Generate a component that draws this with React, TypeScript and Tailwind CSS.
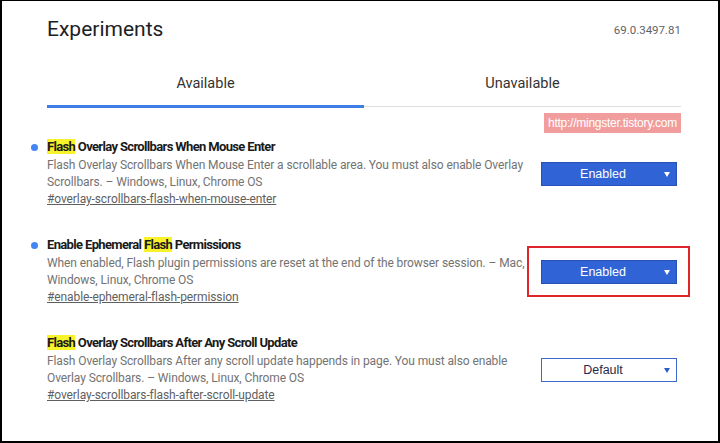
import React from 'react';

type Experiment = {
  before?: string;
  after: string;
  lines: string[];
  link: string;
  value: 'Enabled' | 'Default';
  active: boolean;
  marked?: boolean;
};

const experiments: Experiment[] = [
  {
    after: ' Overlay Scrollbars When Mouse Enter',
    lines: [
      'Flash Overlay Scrollbars When Mouse Enter a scrollable area. You must also enable Overlay',
      'Scrollbars. – Windows, Linux, Chrome OS',
    ],
    link: '#overlay-scrollbars-flash-when-mouse-enter',
    value: 'Enabled',
    active: true,
  },
  {
    before: 'Enable Ephemeral ',
    after: ' Permissions',
    lines: [
      'When enabled, Flash plugin permissions are reset at the end of the browser session. – Mac,',
      'Windows, Linux, Chrome OS',
    ],
    link: '#enable-ephemeral-flash-permission',
    value: 'Enabled',
    active: true,
    marked: true,
  },
  {
    after: ' Overlay Scrollbars After Any Scroll Update',
    lines: [
      'Flash Overlay Scrollbars After any scroll update happends in page. You must also enable',
      'Overlay Scrollbars. – Windows, Linux, Chrome OS',
    ],
    link: '#overlay-scrollbars-flash-after-scroll-update',
    value: 'Default',
    active: false,
  },
];

const Select = ({ value }: { value: 'Enabled' | 'Default' }) => {
  const enabled = value === 'Enabled';
  return (
    <div
      className={
        enabled
          ? 'relative flex h-[24px] w-[136px] items-center justify-center border border-[#2452b5] bg-[#2f63d6] pl-[8px] pr-[20px] font-[Liberation_Sans,Arial,sans-serif] text-[12.5px] text-white'
          : 'relative flex h-[24px] w-[136px] items-center justify-center border border-[#3c67cc] bg-white pl-[8px] pr-[20px] font-[Liberation_Sans,Arial,sans-serif] text-[12.5px] text-[#1f2b4a]'
      }
    >
      {value}
      <span
        className={
          enabled
            ? 'absolute right-[6px] top-[9px] h-0 w-0 border-l-[3px] border-r-[3px] border-t-[5px] border-l-transparent border-r-transparent border-t-white'
            : 'absolute right-[6px] top-[9px] h-0 w-0 border-l-[3px] border-r-[3px] border-t-[5px] border-l-transparent border-r-transparent border-t-[#2d5cc8]'
        }
      />
    </div>
  );
};

export default function App() {
  return (
    <div className="relative h-[443px] w-[720px] overflow-hidden border-b-2 border-l-2 border-r-2 border-t border-black bg-white font-[Roboto,sans-serif]">
      <div className="pl-[45px] pr-[37px]">
        <div className="flex items-start justify-between pt-[14px]">
          <h1 className="text-[21px] leading-[28px] text-[#202124]">Experiments</h1>
          <span className="mt-[8px] text-[11.5px] leading-[14px] text-[#5f6368]">69.0.3497.81</span>
        </div>

        <div className="mt-[31px] flex">
          <div className="flex flex-1 flex-col items-center">
            <span className="text-[14.5px] leading-[20px] text-[#333]">Available</span>
            <div className="mt-[11px] h-[3px] w-full bg-[#3f7ee6]" />
          </div>
          <div className="flex flex-1 flex-col items-center">
            <span className="text-[14.5px] leading-[20px] text-[#333]">Unavailable</span>
            <div className="mt-[11px] flex h-[3px] w-full items-center">
              <div className="h-px w-full bg-[#dedede]" />
            </div>
          </div>
        </div>

        <div className="mt-[29px] flex flex-col gap-[27px]">
          {experiments.map((exp) => (
            <div key={exp.link} className="flex items-start">
              <div className="w-[490px] whitespace-nowrap">
                <div className="relative text-[13px] font-bold leading-[20px] tracking-[-0.65px] text-[#1a1a1a]">
                  {exp.active && (
                    <span className="absolute left-[-16px] top-[7px] h-[7px] w-[7px] rounded-full bg-[#4285f4]" />
                  )}
                  {exp.before}
                  <span className="bg-[#f8f22a]">Flash</span>
                  {exp.after}
                </div>
                <p className="text-[12px] leading-[16.5px] tracking-[-0.1px] text-[#737373]">
                  {exp.lines[0]}
                  <br />
                  {exp.lines[1]}
                </p>
                <a className="block text-[12px] leading-[18px] tracking-[-0.1px] text-[#5f5f5f] underline">{exp.link}</a>
              </div>
              <div className="ml-auto mr-[4px] mt-[25px]">
                {exp.marked ? (
                  <div className="relative">
                    <Select value={exp.value} />
                    <div className="pointer-events-none absolute bottom-[-13px] left-[-14px] right-[-13px] top-[-14px] border-2 border-[#e0242c]" />
                  </div>
                ) : (
                  <Select value={exp.value} />
                )}
              </div>
            </div>
          ))}
        </div>
      </div>

      <div className="absolute right-[37px] top-[112px] flex h-[20px] w-[137px] items-center justify-center bg-[#f29d9d] font-[Liberation_Sans,Arial,sans-serif] text-[12px] tracking-[-0.25px] text-white">
        http://mingster.tistory.com
      </div>
    </div>
  );
}
